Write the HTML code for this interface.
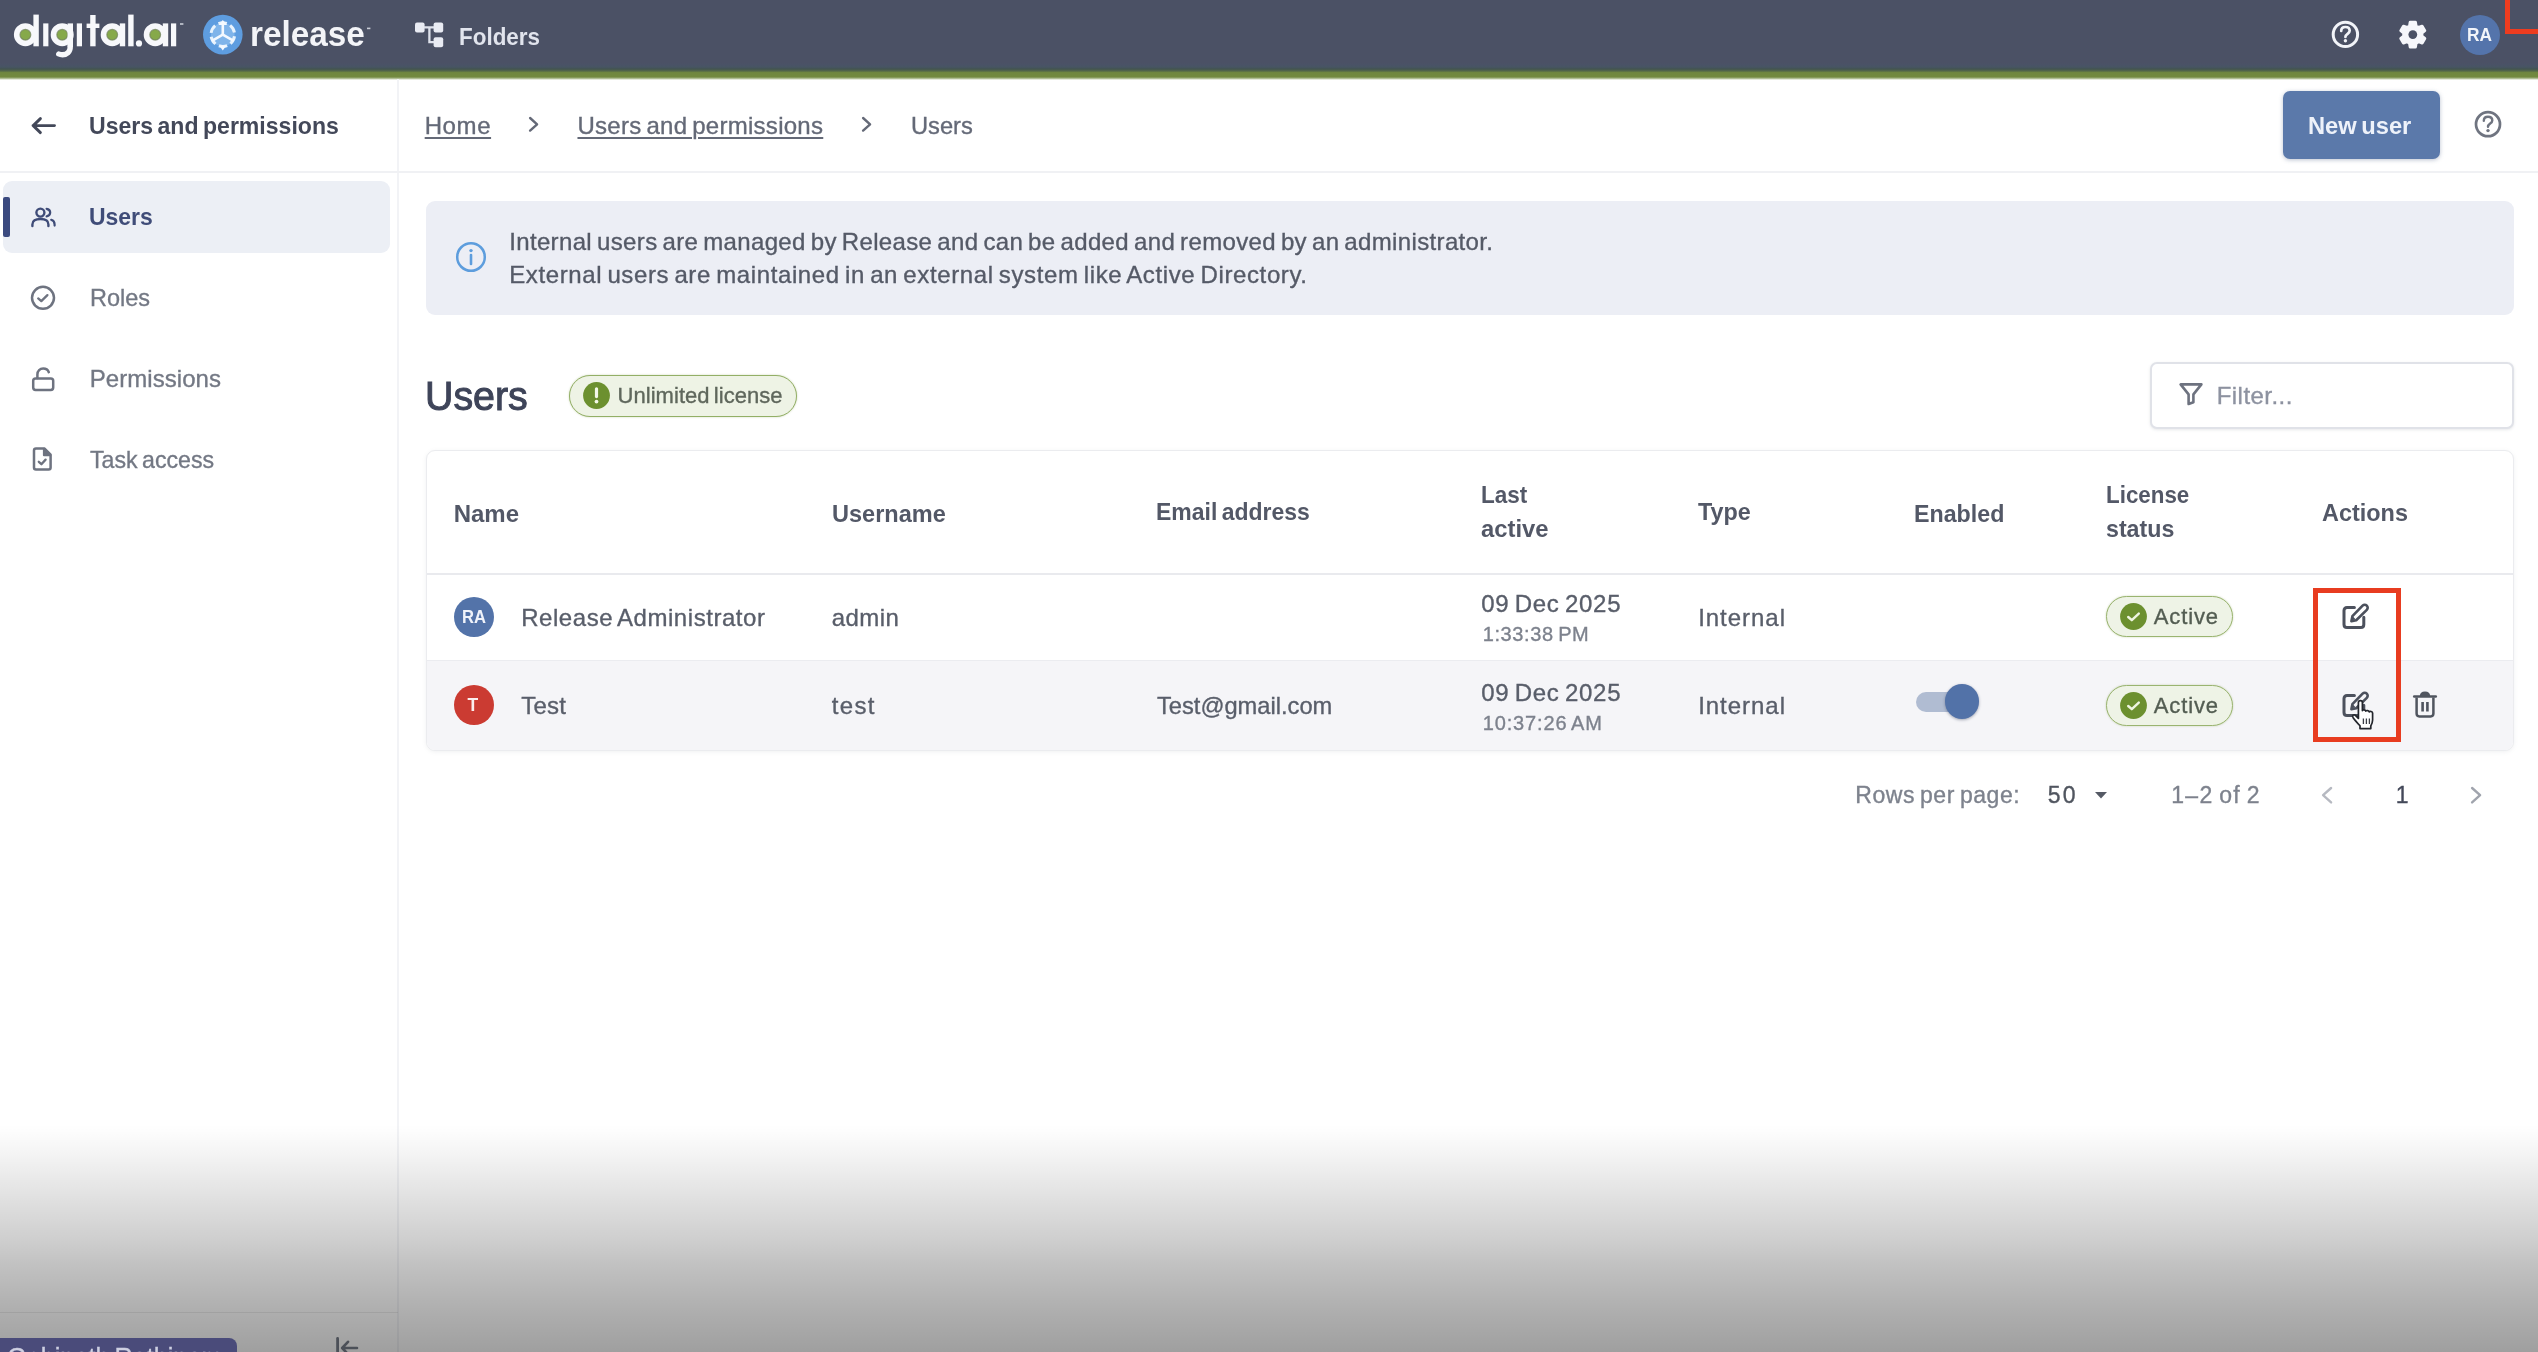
<!DOCTYPE html>
<html lang="en"><head><meta charset="utf-8"><title>Users - Digital.ai Release</title>
<style>
*{box-sizing:border-box}
html,body{margin:0;padding:0}
body{width:2538px;height:1352px;overflow:hidden;position:relative;background:#fff;font-family:"Liberation Sans", sans-serif;}
.a{position:absolute}
.t{position:absolute;white-space:nowrap;font-family:"Liberation Sans", sans-serif;transform-origin:0 50%;}
svg{position:absolute;overflow:visible}
#app{position:absolute;left:0;top:0;width:2538px;height:1352px;overflow:hidden;background:#fff;filter:blur(0.55px)}
</style></head>
<body>
<div id="app">
<div class="a" style="left:0;top:0;width:2538px;height:63px;background:#4b5165"></div>
<div class="a" style="left:0;top:62px;width:2538px;height:18px;background:linear-gradient(#4b5165 0,#4a5266 2.5px,#475563 5px,#435450 7px,#52664a 8.8px,#70873f 10.6px,#72893f 15px,#b3c099 16.6px,#ffffff 18px)"></div>
<div class="a" style="left:2505px;top:-10px;width:60px;height:43.5px;border:5.5px solid #ee3c1f"></div>
<svg style="left:0;top:0" width="400" height="70" viewBox="0 0 400 70"><circle cx="25.4" cy="34.7" r="8.4" fill="#86a94a" stroke="#f7f8fb" stroke-width="6.2"/><circle cx="25.4" cy="34.7" r="5.4" fill="none" stroke="#6b7c55" stroke-width="1.2" opacity=".7"/><rect x="33.4" y="14.6" width="5.399999999999999" height="31.699999999999996" fill="#f7f8fb"/><rect x="43.2" y="23.4" width="5.199999999999996" height="22.9" fill="#f7f8fb"/><circle cx="62.2" cy="34.7" r="8.4" fill="#86a94a" stroke="#f7f8fb" stroke-width="6.2"/><circle cx="62.2" cy="34.7" r="5.4" fill="none" stroke="#6b7c55" stroke-width="1.2" opacity=".7"/><rect x="67.6" y="23.4" width="5.400000000000006" height="23.6" fill="#f7f8fb"/><path d="M70.3 46 C70.3 52.5 66.5 54.8 62.5 54.8 C60.8 54.8 59.7 54.5 58.8 54" fill="none" stroke="#f7f8fb" stroke-width="5.4" stroke-linecap="round"/><rect x="76.8" y="23.4" width="5.200000000000003" height="22.9" fill="#f7f8fb"/><rect x="90.2" y="15" width="5.3999999999999915" height="31.299999999999997" fill="#f7f8fb"/><rect x="86.6" y="23.6" width="12.800000000000011" height="4.399999999999999" fill="#f7f8fb"/><circle cx="112.2" cy="34.7" r="8.4" fill="#86a94a" stroke="#f7f8fb" stroke-width="6.2"/><circle cx="112.2" cy="34.7" r="5.4" fill="none" stroke="#6b7c55" stroke-width="1.2" opacity=".7"/><rect x="119.8" y="23.4" width="5.400000000000006" height="22.9" fill="#f7f8fb"/><rect x="128.2" y="14.6" width="5.400000000000006" height="31.699999999999996" fill="#f7f8fb"/><circle cx="139" cy="43.4" r="3.1" fill="#f7f8fb"/><circle cx="155.2" cy="34.7" r="8.4" fill="#86a94a" stroke="#f7f8fb" stroke-width="6.2"/><circle cx="155.2" cy="34.7" r="5.4" fill="none" stroke="#6b7c55" stroke-width="1.2" opacity=".7"/><rect x="162.8" y="23.4" width="5.399999999999977" height="22.9" fill="#f7f8fb"/><rect x="171" y="23.4" width="5.199999999999989" height="22.9" fill="#f7f8fb"/><rect x="180" y="23.2" width="3.4" height="1.6" fill="#c9ccd6"/><rect x="367" y="27.6" width="3.4" height="1.6" fill="#c9ccd6"/></svg>
<svg style="left:0;top:0" width="400" height="70" viewBox="0 0 400 70"><circle cx="222.8" cy="34.6" r="19.8" fill="#5e9de0"/><circle cx="222.8" cy="34.6" r="11.8" fill="#7fb4ea" stroke="#e8f3fd" stroke-width="3" stroke-dasharray="8.5 3.8" transform="rotate(8 222.8 34.6)"/><line x1="222.8" y1="34.6" x2="222.80" y2="23.10" stroke="#f4f9ff" stroke-width="2.6" stroke-linecap="round"/><line x1="222.8" y1="34.6" x2="232.76" y2="40.35" stroke="#f4f9ff" stroke-width="2.6" stroke-linecap="round"/><line x1="222.8" y1="34.6" x2="212.84" y2="40.35" stroke="#f4f9ff" stroke-width="2.6" stroke-linecap="round"/><path d="M218.60000000000002 25.1 L222.8 20.1 L227.0 25.1 Z" fill="#f4f9ff"/><path d="M219.20000000000002 45.6 L222.8 50.400000000000006 L226.4 45.6 Z" fill="#f4f9ff"/></svg>
<svg style="left:0;top:0" width="600" height="70" viewBox="0 0 600 70"><rect x="415" y="22.4" width="9.6" height="10" rx="2" fill="#e9ebf3"/><rect x="433.6" y="22.4" width="9.6" height="10" rx="2" fill="#e9ebf3"/><rect x="433.6" y="37.2" width="9.6" height="10" rx="2" fill="#e9ebf3"/><path d="M424 27.4 H434 M429.4 27.4 V42.2 H434" fill="none" stroke="#dfe2ec" stroke-width="2.3"/></svg>
<svg style="left:0;top:0" width="2538" height="180" viewBox="0 0 2538 180"><circle cx="2345.4" cy="34.4" r="12.2" fill="none" stroke="#f2f4f9" stroke-width="3.0"/><path d="M2341.2000000000003 31.0 C2341.2000000000003 28.2 2343.2000000000003 27.0 2345.4 27.0 C2348.0 27.0 2349.7000000000003 28.599999999999998 2349.7000000000003 30.799999999999997 C2349.7000000000003 33.8 2345.4 33.8 2345.4 37.0" fill="none" stroke="#f2f4f9" stroke-width="2.7" stroke-linecap="round"/><circle cx="2345.4" cy="40.8" r="1.7" fill="#f2f4f9"/></svg>
<svg style="left:0;top:0" width="2538" height="80" viewBox="0 0 2538 80"><path d="M2415.43 46.92 L2410.17 46.92 L2409.56 43.21 L2406.96 41.71 L2403.44 43.04 L2400.81 38.49 L2403.72 36.10 L2403.72 33.10 L2400.81 30.71 L2403.44 26.16 L2406.96 27.49 L2409.56 25.99 L2410.17 22.28 L2415.43 22.28 L2416.04 25.99 L2418.64 27.49 L2422.16 26.16 L2424.79 30.71 L2421.88 33.10 L2421.88 36.10 L2424.79 38.49 L2422.16 43.04 L2418.64 41.71 L2416.04 43.21 Z" fill="#f6f7fb" stroke="#f6f7fb" stroke-width="3" stroke-linejoin="round"/><circle cx="2412.8" cy="34.6" r="4.4" fill="#4b5165"/></svg>
<div class="a" style="left:2460px;top:15px;width:40px;height:40px;border-radius:50%;background:#5474ab"></div>
<div class="a" style="left:397px;top:79px;width:2px;height:1273px;background:#f2f3f6"></div>
<div class="a" style="left:0;top:171px;width:2538px;height:2px;background:#f0f1f4"></div>
<div class="a" style="left:3px;top:181px;width:387px;height:72px;border-radius:9px;background:#eceff5"></div>
<div class="a" style="left:3px;top:197px;width:6.5px;height:39.5px;border-radius:2px;background:#3b4a7f"></div>
<svg style="left:30px;top:112px" width="28" height="28" viewBox="0 0 28 28" ><path d="M3 13.6 H24.5 M10.4 6.6 L3.2 13.6 L10.4 20.6" fill="none" stroke="#434859" stroke-width="2.9" stroke-linecap="round" stroke-linejoin="round"/></svg>
<svg style="left:30px;top:204px" width="28" height="26" viewBox="0 0 28 26" ><circle cx="10.4" cy="8.6" r="4" fill="none" stroke="#3f4c78" stroke-width="2.4"/><path d="M2.4 22 V20.4 C2.4 16.8 5.4 15 10.4 15 C15.4 15 18.4 16.8 18.4 20.4 V22" fill="none" stroke="#3f4c78" stroke-width="2.4" stroke-linecap="round"/><path d="M16.6 4.8 C19 5.2 20.2 6.8 20.2 8.6 C20.2 10.4 19 12 16.6 12.4" fill="none" stroke="#3f4c78" stroke-width="2.2" stroke-linecap="round"/><path d="M21.2 15.8 C23.6 16.6 24.6 18.2 24.6 20.4 V21.6" fill="none" stroke="#3f4c78" stroke-width="2.2" stroke-linecap="round"/></svg>
<svg style="left:29px;top:284px" width="28" height="28" viewBox="0 0 28 28" ><circle cx="14" cy="13.8" r="11" fill="none" stroke="#6e7380" stroke-width="2.5"/><path d="M9.2 14.4 L12.3 17.1 L18.4 11.1" fill="none" stroke="#6e7380" stroke-width="2.3" stroke-linecap="round" stroke-linejoin="round"/></svg>
<svg style="left:30px;top:365px" width="28" height="28" viewBox="0 0 28 28" ><rect x="3.2" y="13.4" width="20" height="11.6" rx="2.4" fill="none" stroke="#6e7380" stroke-width="2.5"/><path d="M7.4 13 V9.6 C7.4 5.6 10 3.6 13.2 3.6 C16 3.6 18 5 18.8 7.2" fill="none" stroke="#6e7380" stroke-width="2.5" stroke-linecap="round"/></svg>
<svg style="left:30px;top:446px" width="26" height="28" viewBox="0 0 26 28" ><path d="M4 4.6 C4 3.4 4.8 2.6 6 2.6 H14.6 L20.6 8.6 V21.6 C20.6 22.8 19.8 23.6 18.6 23.6 H6 C4.8 23.6 4 22.8 4 21.6 Z" fill="none" stroke="#6e7380" stroke-width="2.5" stroke-linejoin="round"/><path d="M14 3 V9.2 H20.2 Z" fill="#6e7380" stroke="#6e7380" stroke-width="2.2" stroke-linejoin="round"/><path d="M8.8 15.8 L11.4 18.2 L15.6 13.6" fill="none" stroke="#6e7380" stroke-width="2.3" stroke-linecap="round" stroke-linejoin="round"/></svg>
<svg style="left:529.2px;top:117.4px" width="9.6" height="14.6" viewBox="0 0 9.6 14.6" ><path d="M0.6 0 L7.6 6.3 L0.6 12.6" fill="none" stroke="#646977" stroke-width="2.4" stroke-linecap="round" stroke-linejoin="round" transform="translate(0.5,1)"/></svg>
<svg style="left:862.4px;top:117.4px" width="9.6" height="14.6" viewBox="0 0 9.6 14.6" ><path d="M0.6 0 L7.6 6.3 L0.6 12.6" fill="none" stroke="#646977" stroke-width="2.4" stroke-linecap="round" stroke-linejoin="round" transform="translate(0.5,1)"/></svg>
<div class="a" style="left:2282.5px;top:91px;width:157.5px;height:68px;border-radius:7px;background:#5b79aa;box-shadow:0 1px 4px rgba(60,80,120,.35)"></div>
<svg style="left:0;top:0" width="2538" height="180" viewBox="0 0 2538 180"><circle cx="2488" cy="124.2" r="12" fill="none" stroke="#6f7480" stroke-width="2.7"/><path d="M2483.8 120.8 C2483.8 118.0 2485.8 116.8 2488 116.8 C2490.6 116.8 2492.3 118.4 2492.3 120.60000000000001 C2492.3 123.60000000000001 2488 123.60000000000001 2488 126.8" fill="none" stroke="#6f7480" stroke-width="2.4000000000000004" stroke-linecap="round"/><circle cx="2488" cy="130.6" r="1.7" fill="#6f7480"/></svg>
<div class="a" style="left:426px;top:200.5px;width:2087.5px;height:114px;border-radius:9px;background:#eceef5"></div>
<svg style="left:455px;top:241px" width="32" height="32" viewBox="0 0 32 32" ><circle cx="16" cy="16" r="13.8" fill="none" stroke="#5d9ddd" stroke-width="2.5"/><circle cx="16" cy="9.6" r="1.7" fill="#5d9ddd"/><path d="M16 14 V23" stroke="#5d9ddd" stroke-width="2.6" stroke-linecap="round"/></svg>
<div class="a" style="left:568.5px;top:375px;width:228px;height:41.5px;border-radius:21px;background:#eef3e5;border:1.7px solid #93af66;box-shadow:0 0 2px rgba(130,160,80,.45)"></div>
<svg style="left:582.5px;top:382px" width="27" height="27" viewBox="0 0 27 27" ><circle cx="13.5" cy="13.5" r="13.4" fill="#6c902f"/><path d="M13.5 6.8 V14.6" stroke="#f3f8e8" stroke-width="3.2" stroke-linecap="round"/><circle cx="13.5" cy="19.6" r="1.9" fill="#f3f8e8"/></svg>
<div class="a" style="left:2150px;top:362px;width:364px;height:66.5px;border-radius:7px;background:#fff;border:2px solid #e0e2e8;box-shadow:0 1px 3px rgba(120,125,140,.18)"></div>
<svg style="left:2177.6px;top:382px" width="26" height="24" viewBox="0 0 26 24" ><path d="M2.6 2.4 H23.4 L15.4 12.4 V20.2 L10.6 22 V12.4 Z" fill="none" stroke="#6d727f" stroke-width="2.6" stroke-linejoin="round"/></svg>
<div class="a" style="left:426px;top:450px;width:2088px;height:300.5px;border-radius:9px;background:#fff;border:1.5px solid #ebecef;box-shadow:0 1px 4px rgba(110,115,130,.10);overflow:hidden"><div class="a" style="left:0;top:122px;width:2088px;height:2px;background:#e9eaee"></div><div class="a" style="left:0;top:209px;width:2088px;height:92px;background:#f5f5f8"></div><div class="a" style="left:0;top:208.5px;width:2088px;height:1.5px;background:#ebecf0"></div></div>
<div class="a" style="left:454.2px;top:597px;width:39.8px;height:39.8px;border-radius:50%;background:#5373a9"></div>
<div class="a" style="left:454.2px;top:685px;width:39.8px;height:39.8px;border-radius:50%;background:#cb3b32"></div>
<div class="a" style="left:2106px;top:596px;width:126.5px;height:41px;border-radius:21px;background:#eef3e6;border:1.7px solid #9ab470;box-shadow:0 0 2px rgba(130,160,80,.45)"></div>
<div class="a" style="left:2106px;top:684.5px;width:126.5px;height:41px;border-radius:21px;background:#eef3e6;border:1.7px solid #9ab470;box-shadow:0 0 2px rgba(130,160,80,.45)"></div>
<svg style="left:2120.0px;top:603.0px" width="27" height="27" viewBox="0 0 27 27" ><circle cx="13.5" cy="13.5" r="13.4" fill="#6c902f"/><path d="M8.2 14 L11.8 17.2 L18.8 10.6" fill="none" stroke="#eef5e0" stroke-width="2.4" stroke-linecap="round" stroke-linejoin="round"/></svg>
<svg style="left:2120.0px;top:691.5px" width="27" height="27" viewBox="0 0 27 27" ><circle cx="13.5" cy="13.5" r="13.4" fill="#6c902f"/><path d="M8.2 14 L11.8 17.2 L18.8 10.6" fill="none" stroke="#eef5e0" stroke-width="2.4" stroke-linecap="round" stroke-linejoin="round"/></svg>
<div class="a" style="left:1915.5px;top:691.5px;width:60px;height:20.5px;border-radius:11px;background:#b0bcd2"></div>
<div class="a" style="left:1944.5px;top:684px;width:34.5px;height:34.5px;border-radius:50%;background:#5272a8;box-shadow:0 1px 3px rgba(40,50,80,.4)"></div>
<svg style="left:2342.2px;top:603px" width="28" height="28" viewBox="0 0 28 28" ><path d="M12.4 4.6 H5 C3.2 4.6 2 5.8 2 7.6 V21.4 C2 23.2 3.2 24.4 5 24.4 H18.8 C20.6 24.4 21.8 23.2 21.8 21.4 V14.2" fill="none" stroke="#4c515d" stroke-width="3" stroke-linecap="round" stroke-linejoin="round"/><path d="M20.6 2.6 C21.8 1.4 23.6 1.4 24.8 2.6 C26 3.8 26 5.6 24.8 6.8 L14.2 17.2 L9.4 18.2 L10.4 13.2 Z" fill="none" stroke="#4c515d" stroke-width="2.6" stroke-linejoin="round"/><path d="M10.6 17 L11.2 13.8 L13.8 16.4 Z" fill="#4c515d"/></svg>
<svg style="left:2342.2px;top:691px" width="28" height="28" viewBox="0 0 28 28" ><path d="M12.4 4.6 H5 C3.2 4.6 2 5.8 2 7.6 V21.4 C2 23.2 3.2 24.4 5 24.4 H18.8 C20.6 24.4 21.8 23.2 21.8 21.4 V14.2" fill="none" stroke="#4c515d" stroke-width="3" stroke-linecap="round" stroke-linejoin="round"/><path d="M20.6 2.6 C21.8 1.4 23.6 1.4 24.8 2.6 C26 3.8 26 5.6 24.8 6.8 L14.2 17.2 L9.4 18.2 L10.4 13.2 Z" fill="none" stroke="#4c515d" stroke-width="2.6" stroke-linejoin="round"/><path d="M10.6 17 L11.2 13.8 L13.8 16.4 Z" fill="#4c515d"/></svg>
<svg style="left:2411.5px;top:690px" width="26" height="29" viewBox="0 0 26 29" ><path d="M2.2 6.6 H23.8" stroke="#50555f" stroke-width="2.5" stroke-linecap="round"/><path d="M8.6 6 C8.6 3.4 10 2.2 13 2.2 C16 2.2 17.4 3.4 17.4 6 Z" fill="#50555f" stroke="#50555f" stroke-width="1.4" stroke-linejoin="round"/><path d="M4.6 7.6 V23.6 C4.6 25.2 5.8 26.4 7.4 26.4 H18.6 C20.2 26.4 21.4 25.2 21.4 23.6 V7.6" fill="none" stroke="#50555f" stroke-width="2.5" stroke-linejoin="round"/><path d="M10.6 12 V21.4 M15.4 12 V21.4" stroke="#50555f" stroke-width="2.6"/></svg>
<svg style="left:2349.5px;top:700px" width="30" height="32" viewBox="0 0 30 32" ><path d="M8.4 2.6 C8.4 1.2 9.4 0.6 10.4 0.6 C11.4 0.6 12.4 1.2 12.4 2.6 V10.6 C12.8 9.4 15.6 9.6 15.8 11.2 C16.4 10 19 10.4 19.2 12 C20 11 22.4 11.4 22.6 13.2 V20 C22.6 22.6 21.6 24.4 20.8 25.8 V28.6 H10 V25.8 C8 23.6 4.4 19.4 3 17.4 C1.8 15.6 3.8 14 5.4 15.4 L8.4 18.4 Z" fill="#ffffff" stroke="#22252c" stroke-width="1.7" stroke-linejoin="round"/><path d="M13.4 18.4 V24 M16.4 18.4 V24 M19.4 18.4 V24" stroke="#3a3d46" stroke-width="1.3"/></svg>
<div class="a" style="left:2313.2px;top:588px;width:88px;height:154.2px;border:5px solid #e83c20"></div>
<svg style="left:2094.5px;top:791.5px" width="12" height="7" viewBox="0 0 12 7" ><path d="M0 0 H12 L6 6.6 Z" fill="#555a65"/></svg>
<svg style="left:2322.4px;top:786.6px" width="10.6" height="16.4" viewBox="0 0 10.6 16.4" ><path d="M8.6 0 L0.6 7.2 L8.6 14.4" fill="none" stroke="#b6b9c1" stroke-width="2.4" stroke-linecap="round" stroke-linejoin="round" transform="translate(0.5,1)"/></svg>
<svg style="left:2470.6px;top:786.6px" width="10.6" height="16.4" viewBox="0 0 10.6 16.4" ><path d="M0.6 0 L8.6 7.2 L0.6 14.4" fill="none" stroke="#a0a4ad" stroke-width="2.4" stroke-linecap="round" stroke-linejoin="round" transform="translate(0.5,1)"/></svg>
<div class="a" style="left:0;top:1124px;width:2538px;height:228px;pointer-events:none;background:linear-gradient(rgba(0,0,0,0) 0,rgba(0,0,0,.012) 4%,rgba(0,0,0,.04) 12%,rgba(0,0,0,.085) 24%,rgba(0,0,0,.135) 36%,rgba(0,0,0,.19) 50%,rgba(0,0,0,.245) 62%,rgba(0,0,0,.31) 80%,rgba(0,0,0,.375) 100%)"></div>
<div class="a" style="left:0;top:1311.5px;width:398px;height:1.5px;background:rgba(110,110,110,.2)"></div>
<svg style="left:333px;top:1335px" width="30" height="24" viewBox="0 0 30 24" ><path d="M4.6 3.4 V24" stroke="#4c5058" stroke-width="2.8" stroke-linecap="round"/><path d="M9.4 13 H24 M15 6.8 L9.2 13 L15 19.2" fill="none" stroke="#4c5058" stroke-width="2.6" stroke-linecap="round" stroke-linejoin="round"/></svg>
<div class="a" style="left:-10px;top:1337.5px;width:247px;height:40px;border-radius:8px;background:#4a4b7a"></div>
<div class="t" id="t0" style="left:249.90px;top:16.60px;font-size:34.5px;line-height:34.5px;font-weight:700;color:#f3f4f8;transform:scaleX(0.9642);">release</div>
<div class="t" id="t1" style="left:458.98px;top:25.18px;font-size:24px;line-height:24px;font-weight:700;color:#e1e4ed;transform:scaleX(0.9346);">Folders</div>
<div class="t" id="t2" style="left:2466.84px;top:27.19px;font-size:17.5px;line-height:17.5px;font-weight:700;color:#f2f5fa;transform:scaleX(0.9874);">RA</div>
<div class="t" id="t3" style="left:89.18px;top:113.58px;font-size:24px;line-height:24px;font-weight:700;color:#434859;word-spacing:-2.04px;transform:scaleX(0.9607);">Users and permissions</div>
<div class="t" id="t4" style="left:424.68px;top:113.58px;font-size:24px;line-height:24px;font-weight:400;color:#646977;letter-spacing:0.596px;-webkit-text-stroke:0.35px #646977;text-decoration:underline;text-decoration-thickness:2px;text-underline-offset:3px;">Home</div>
<div class="t" id="t5" style="left:577.48px;top:113.58px;font-size:24px;line-height:24px;font-weight:400;color:#646977;letter-spacing:0.275px;word-spacing:-2.04px;-webkit-text-stroke:0.35px #646977;text-decoration:underline;text-decoration-thickness:2px;text-underline-offset:3px;">Users and permissions</div>
<div class="t" id="t6" style="left:911.18px;top:113.58px;font-size:24px;line-height:24px;font-weight:400;color:#646977;-webkit-text-stroke:0.35px #646977;transform:scaleX(0.9864);">Users</div>
<div class="t" id="t7" style="left:2307.68px;top:113.88px;font-size:24px;line-height:24px;font-weight:700;color:#eef2fa;word-spacing:-2.04px;transform:scaleX(0.9871);">New user</div>
<div class="t" id="t8" style="left:89.18px;top:205.28px;font-size:24px;line-height:24px;font-weight:700;color:#3f4c78;transform:scaleX(0.9566);">Users</div>
<div class="t" id="t9" style="left:89.68px;top:286.18px;font-size:24px;line-height:24px;font-weight:400;color:#737884;-webkit-text-stroke:0.35px #737884;transform:scaleX(0.9782);">Roles</div>
<div class="t" id="t10" style="left:89.68px;top:367.28px;font-size:24px;line-height:24px;font-weight:400;color:#737884;letter-spacing:0.062px;-webkit-text-stroke:0.35px #737884;">Permissions</div>
<div class="t" id="t11" style="left:89.68px;top:448.48px;font-size:24px;line-height:24px;font-weight:400;color:#737884;word-spacing:-2.04px;-webkit-text-stroke:0.35px #737884;transform:scaleX(0.9646);">Task access</div>
<div class="t" id="t12" style="left:509.18px;top:229.68px;font-size:24px;line-height:24px;font-weight:400;color:#555a67;letter-spacing:0.354px;word-spacing:-2.04px;-webkit-text-stroke:0.35px #555a67;">Internal users are managed by Release and can be added and removed by an administrator.</div>
<div class="t" id="t13" style="left:509.18px;top:263.28px;font-size:24px;line-height:24px;font-weight:400;color:#555a67;letter-spacing:0.616px;word-spacing:-2.04px;-webkit-text-stroke:0.35px #555a67;">External users are maintained in an external system like Active Directory.</div>
<div class="t" id="t14" style="left:424.80px;top:376.14px;font-size:40px;line-height:40px;font-weight:400;color:#3e4459;-webkit-text-stroke:1.0px #3e4459;transform:scaleX(0.9832);">Users</div>
<div class="t" id="t15" style="left:617.59px;top:384.98px;font-size:22px;line-height:22px;font-weight:400;color:#5f675c;letter-spacing:0.031px;word-spacing:-1.87px;-webkit-text-stroke:0.35px #5f675c;">Unlimited license</div>
<div class="t" id="t16" style="left:2216.68px;top:384.28px;font-size:24px;line-height:24px;font-weight:400;color:#8d92a0;letter-spacing:0.463px;-webkit-text-stroke:0.35px #8d92a0;">Filter...</div>
<div class="t" id="t17" style="left:453.68px;top:502.48px;font-size:24px;line-height:24px;font-weight:700;color:#535867;">Name</div>
<div class="t" id="t18" style="left:831.68px;top:502.48px;font-size:24px;line-height:24px;font-weight:700;color:#535867;transform:scaleX(0.9807);">Username</div>
<div class="t" id="t19" style="left:1156.18px;top:500.28px;font-size:24px;line-height:24px;font-weight:700;color:#535867;word-spacing:-2.04px;transform:scaleX(0.9571);">Email address</div>
<div class="t" id="t20" style="left:1481.18px;top:483.48px;font-size:24px;line-height:24px;font-weight:700;color:#535867;transform:scaleX(0.9384);">Last</div>
<div class="t" id="t21" style="left:1481.18px;top:516.98px;font-size:24px;line-height:24px;font-weight:700;color:#535867;transform:scaleX(0.9935);">active</div>
<div class="t" id="t22" style="left:1698.18px;top:500.28px;font-size:24px;line-height:24px;font-weight:700;color:#535867;transform:scaleX(0.9739);">Type</div>
<div class="t" id="t23" style="left:1913.68px;top:502.48px;font-size:24px;line-height:24px;font-weight:700;color:#535867;transform:scaleX(0.9674);">Enabled</div>
<div class="t" id="t24" style="left:2105.68px;top:483.48px;font-size:24px;line-height:24px;font-weight:700;color:#535867;transform:scaleX(0.9321);">License</div>
<div class="t" id="t25" style="left:2105.68px;top:516.98px;font-size:24px;line-height:24px;font-weight:700;color:#535867;transform:scaleX(0.9665);">status</div>
<div class="t" id="t26" style="left:2321.68px;top:500.88px;font-size:24px;line-height:24px;font-weight:700;color:#535867;transform:scaleX(0.9762);">Actions</div>
<div class="t" id="t27" style="left:462.04px;top:608.99px;font-size:17.5px;line-height:17.5px;font-weight:700;color:#f0f3fa;transform:scaleX(0.9478);">RA</div>
<div class="t" id="t28" style="left:521.18px;top:605.68px;font-size:24px;line-height:24px;font-weight:400;color:#595e6a;letter-spacing:0.554px;word-spacing:-2.04px;-webkit-text-stroke:0.35px #595e6a;">Release Administrator</div>
<div class="t" id="t29" style="left:831.68px;top:605.68px;font-size:24px;line-height:24px;font-weight:400;color:#595e6a;letter-spacing:0.436px;-webkit-text-stroke:0.35px #595e6a;">admin</div>
<div class="t" id="t30" style="left:1481.18px;top:592.28px;font-size:24px;line-height:24px;font-weight:400;color:#595e6a;letter-spacing:0.729px;word-spacing:-2.04px;-webkit-text-stroke:0.35px #595e6a;">09 Dec 2025</div>
<div class="t" id="t31" style="left:1482.70px;top:624.27px;font-size:20px;line-height:20px;font-weight:400;color:#7d828d;letter-spacing:0.612px;word-spacing:-1.7px;-webkit-text-stroke:0.35px #7d828d;">1:33:38 PM</div>
<div class="t" id="t32" style="left:1698.18px;top:605.68px;font-size:24px;line-height:24px;font-weight:400;color:#595e6a;letter-spacing:0.965px;-webkit-text-stroke:0.35px #595e6a;">Internal</div>
<div class="t" id="t33" style="left:2153.79px;top:606.18px;font-size:22px;line-height:22px;font-weight:400;color:#535d52;letter-spacing:0.858px;-webkit-text-stroke:0.35px #535d52;">Active</div>
<div class="t" id="t34" style="left:467.54px;top:696.79px;font-size:17.5px;line-height:17.5px;font-weight:700;color:#fbeeee;">T</div>
<div class="t" id="t35" style="left:521.18px;top:693.88px;font-size:24px;line-height:24px;font-weight:400;color:#595e6a;letter-spacing:0.268px;-webkit-text-stroke:0.35px #595e6a;">Test</div>
<div class="t" id="t36" style="left:831.68px;top:693.88px;font-size:24px;line-height:24px;font-weight:400;color:#595e6a;letter-spacing:1.378px;-webkit-text-stroke:0.35px #595e6a;">test</div>
<div class="t" id="t37" style="left:1156.68px;top:694.08px;font-size:24px;line-height:24px;font-weight:400;color:#595e6a;-webkit-text-stroke:0.35px #595e6a;transform:scaleX(0.9863);">Test@gmail.com</div>
<div class="t" id="t38" style="left:1481.18px;top:680.68px;font-size:24px;line-height:24px;font-weight:400;color:#595e6a;letter-spacing:0.729px;word-spacing:-2.04px;-webkit-text-stroke:0.35px #595e6a;">09 Dec 2025</div>
<div class="t" id="t39" style="left:1482.70px;top:713.07px;font-size:20px;line-height:20px;font-weight:400;color:#7d828d;letter-spacing:0.869px;word-spacing:-1.7px;-webkit-text-stroke:0.35px #7d828d;">10:37:26 AM</div>
<div class="t" id="t40" style="left:1698.18px;top:694.48px;font-size:24px;line-height:24px;font-weight:400;color:#595e6a;letter-spacing:0.965px;-webkit-text-stroke:0.35px #595e6a;">Internal</div>
<div class="t" id="t41" style="left:2153.79px;top:694.58px;font-size:22px;line-height:22px;font-weight:400;color:#535d52;letter-spacing:0.858px;-webkit-text-stroke:0.35px #535d52;">Active</div>
<div class="t" id="t42" style="left:1855.23px;top:783.53px;font-size:23px;line-height:23px;font-weight:400;color:#7d828d;letter-spacing:0.561px;word-spacing:-1.96px;-webkit-text-stroke:0.35px #7d828d;">Rows per page:</div>
<div class="t" id="t43" style="left:2047.73px;top:783.53px;font-size:23px;line-height:23px;font-weight:400;color:#50555f;letter-spacing:2.171px;-webkit-text-stroke:0.35px #50555f;">50</div>
<div class="t" id="t44" style="left:2171.24px;top:783.53px;font-size:23px;line-height:23px;font-weight:400;color:#7d828d;letter-spacing:1.307px;word-spacing:-1.96px;-webkit-text-stroke:0.35px #7d828d;">1–2 of 2</div>
<div class="t" id="t45" style="left:2395.74px;top:783.53px;font-size:23px;line-height:23px;font-weight:400;color:#434859;-webkit-text-stroke:0.35px #434859;">1</div>
<div class="t" id="t46" style="left:6.51px;top:1344.74px;font-size:27px;line-height:27px;font-weight:400;color:#cfd0e2;word-spacing:-2.3px;-webkit-text-stroke:0.35px #cfd0e2;transform:scaleX(0.9355);">Gobinath Rathinam</div>
</div>
</body></html>
